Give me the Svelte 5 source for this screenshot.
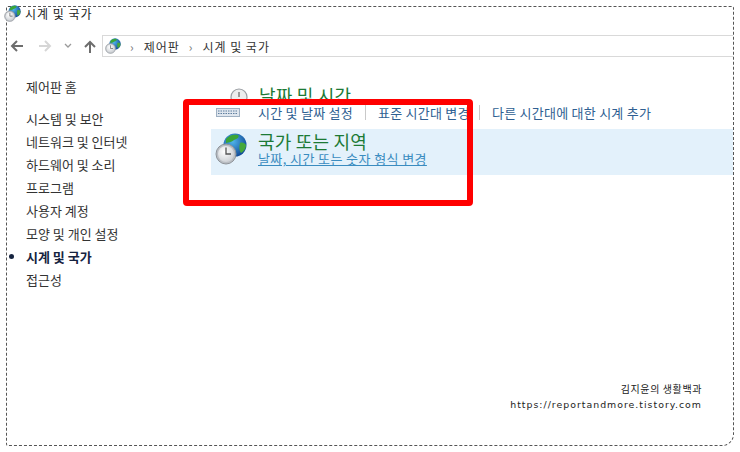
<script>
  const menu = ["시스템 및 보안", "네트워크 및 인터넷", "하드웨어 및 소리", "프로그램", "사용자 계정", "모양 및 개인 설정", "시계 및 국가", "접근성"];
  const activeItem = "시계 및 국가";
</script>

{#snippet globeClock(size)}
  <svg width={size} height={size} viewBox="0 0 32 32">
    <defs>
      <radialGradient id="sea" cx="0.4" cy="0.35" r="0.75">
        <stop offset="0" stop-color="#4fb4ea" />
        <stop offset="1" stop-color="#0b3f8e" />
      </radialGradient>
      <radialGradient id="dial" cx="0.4" cy="0.35" r="0.8">
        <stop offset="0" stop-color="#ffffff" />
        <stop offset="1" stop-color="#c4c8cd" />
      </radialGradient>
    </defs>
    <circle cx="20" cy="12" r="11.500" fill="url(#sea)" />
    <path d="M11 6c3-4 8-5 12-4 2 2-1 4-4 5-2 2-5 2-8 3z" fill="#3aa537" />
    <path d="M25 10c2-1 5 0 6 2 0 4-3 7-5 8-2-2-2-7-1-10z" fill="#46a83a" />
    <circle cx="11" cy="21" r="10" fill="#b9bdc2" stroke="#8f949a" stroke-width="1" />
    <circle cx="11" cy="21" r="8" fill="url(#dial)" />
    <path d="M11 14.500V21h5" fill="none" stroke="#555" stroke-width="1.300" />
  </svg>
{/snippet}

<div class="frame">
  <div class="title">
    <span class="title-icon">{@render globeClock(17)}</span>
    <span>시계 및 국가</span>
  </div>

  <div class="nav">
    <svg class="arrow" width="16" height="14" viewBox="0 0 16 14"><path d="M14 7H3M8 2 3 7l5 5" fill="none" stroke="#6d6d6d" stroke-width="2" /></svg>
    <svg class="arrow" width="16" height="14" viewBox="0 0 16 14"><path d="M2 7h11M8 2l5 5-5 5" fill="none" stroke="#d6d6d6" stroke-width="2" /></svg>
    <svg class="chev" width="8" height="6" viewBox="0 0 8 6"><path d="M1 1l3 3 3-3" fill="none" stroke="#9a9a9a" stroke-width="1.3" /></svg>
    <svg class="arrow" width="14" height="15" viewBox="0 0 14 15"><path d="M7 14V3M2 8l5-5 5 5" fill="none" stroke="#6d6d6d" stroke-width="2" /></svg>
    <div class="address">
      {@render globeClock(16)}
      <span class="sep">›</span>
      <span>제어판</span>
      <span class="sep">›</span>
      <span>시계 및 국가</span>
    </div>
  </div>

  <div class="body">
    <aside class="sidebar">
      <div class="home">제어판 홈</div>
      <ul>
        {#each menu as item}
          <li class:active={item === activeItem}>{item}</li>
        {/each}
      </ul>
    </aside>

    <main class="content">
      <div class="section-head">
        <svg class="head-icon" width="18" height="18" viewBox="0 0 18 18">
          <circle cx="9" cy="9" r="8" fill="#eceded" stroke="#9a9ea3" stroke-width="1.2" />
          <path d="M9 4v5" stroke="#666" stroke-width="1.2" />
        </svg>
        <span class="heading">날짜 및 시간</span>
      </div>
      <div class="links">
        <svg class="keyboard" width="24" height="9" viewBox="0 0 24 9">
          <rect x=".5" y=".5" width="23" height="8" fill="#dfe6ee" stroke="#9fb0c2" />
          <path d="M2 3h20M2 5.500h20" stroke="#5f7f9f" stroke-dasharray="1.500 1" />
        </svg>
        <span class="link">시간 및 날짜 설정</span>
        <span class="bar"></span>
        <span class="link clipped">표준 시간대 변경</span>
        <span class="bar"></span>
        <span class="link">다른 시간대에 대한 시계 추가</span>
      </div>
      <div class="region">
        <span class="region-icon">{@render globeClock(32)}</span>
        <div class="region-text">
          <div class="heading big">국가 또는 지역</div>
          <div class="sub">날짜, 시간 또는 숫자 형식 변경</div>
        </div>
      </div>
    </main>
  </div>

  <div class="mark-box"></div>
  <div class="watermark">
    <div class="name">김지윤의 생활백과</div>
    <div class="url">https://reportandmore.tistory.com</div>
  </div>
</div>

<style>
  :global(body) {
    margin: 0;
    background: #fff;
  }
  .frame {
    position: relative;
    box-sizing: border-box;
    width: 728px;
    height: 440px;
    margin: 6px 0 0 6px;
    border: 1px dashed #555;
    border-radius: 2px 2px 12px 2px;
    font-family: "Noto Sans CJK KR", "Noto Sans", sans-serif;
    font-size: 12px;
    color: #222;
  }
  .title {
    display: flex;
    align-items: center;
    gap: 4px;
    height: 12px;
    margin-left: -3px;
    font-size: 12px;
    letter-spacing: 1px;
  }
  .title-icon {
    display: flex;
  }
  .nav {
    display: flex;
    align-items: center;
    height: 22px;
    margin-top: 16px;
    padding-left: 2px;
  }
  .arrow {
    flex: none;
    margin-right: 12px;
  }
  .chev {
    flex: none;
    margin: 0 11px 0 -1px;
  }
  .address {
    flex: 1;
    display: flex;
    align-items: center;
    gap: 9px;
    box-sizing: border-box;
    height: 22px;
    margin-left: -7px;
    padding-left: 2px;
    border: 1px solid #d9d9d9;
    border-right: none;
    color: #333;
    letter-spacing: 1px;
  }
  .sep {
    color: #777;
  }
  .body {
    display: flex;
    margin-top: 18px;
  }
  .sidebar {
    width: 176px;
    flex: none;
    padding-left: 19px;
    box-sizing: border-box;
    font-size: 13px;
    color: #333;
  }
  .home {
    height: 23px;
    line-height: 23px;
    margin-bottom: 9px;
  }
  ul {
    list-style: none;
    margin: 0;
    padding: 0;
  }
  li {
    position: relative;
    height: 23px;
    line-height: 23px;
  }
  li.active {
    font-weight: 700;
    color: #15233f;
  }
  li.active::before {
    content: "";
    position: absolute;
    left: -17px;
    top: 9px;
    width: 5px;
    height: 5px;
    border-radius: 50%;
    background: #15233f;
  }
  .content {
    flex: 1;
    padding-left: 28px;
    min-width: 0;
  }
  .section-head {
    display: flex;
    align-items: flex-start;
    height: 15px;
    overflow: hidden;
    margin-top: 10px;
    padding-left: 19px;
    gap: 11px;
  }
  .head-icon {
    flex: none;
    margin-top: 3px;
  }
  .heading {
    color: #1c7a35;
    font-size: 18px;
    line-height: 20px;
    letter-spacing: .2px;
  }
  .links {
    display: flex;
    align-items: center;
    height: 20px;
    margin-top: 2px;
    padding-left: 5px;
    color: #2f5f92;
    font-size: 13px;
    letter-spacing: .25px;
  }
  .keyboard {
    flex: none;
    margin-right: 18px;
  }
  .bar {
    width: 1px;
    height: 15px;
    margin: 0 12px;
    background: #c9c9c9;
  }
  .clipped {
    width: 89px;
    white-space: nowrap;
  }
  .region {
    display: flex;
    height: 46px;
    margin-top: 7px;
    background: #e3f1fb;
  }
  .region-icon {
    display: flex;
    align-self: flex-start;
    margin: 4px 11px 0 4px;
  }
  .region-text {
    margin-top: 2px;
  }
  .big {
    font-size: 18px;
    line-height: 20px;
  }
  .sub {
    color: #3a8cc0;
    font-size: 13px;
    line-height: 16px;
    letter-spacing: .4px;
    text-decoration: underline;
  }
  .mark-box {
    position: absolute;
    left: 176px;
    top: 92px;
    width: 290px;
    height: 107px;
    box-sizing: border-box;
    border: 6px solid #f00;
    border-radius: 4px;
  }
  .watermark {
    position: absolute;
    right: 31px;
    top: 373px;
    text-align: right;
    font-size: 10px;
    line-height: 17px;
    color: #222;
  }
  .name {
    letter-spacing: .6px;
  }
  .url {
    letter-spacing: 1px;
    font-family: "DejaVu Sans", sans-serif;
    font-size: 9.400px;
    margin-top: -1px;
  }
</style>
